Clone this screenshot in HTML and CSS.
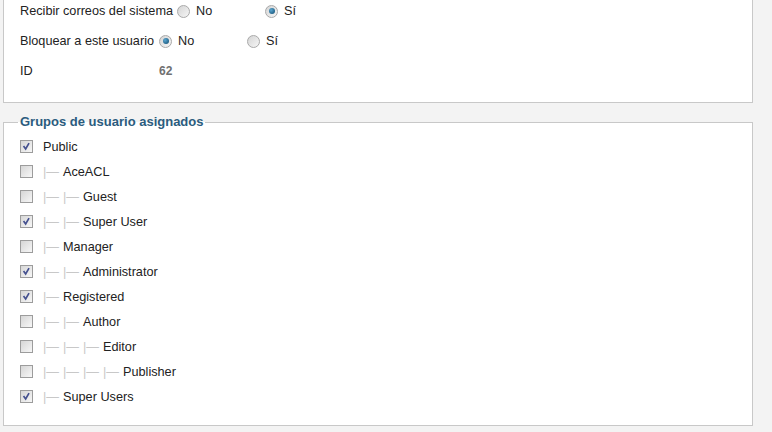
FILE: index.html
```html
<!DOCTYPE html>
<html>

<head>
    <title>Usuario</title>
    <link rel="stylesheet" href="styles.css">
</head>

<body>
    <div class="page">
        <div class="panel">
            <div class="row">
                <span class="row-label">Recibir correos del sistema</span>
                <span class="option"><span class="radio"></span>No</span>
                <span class="option"><span class="radio checked"></span>Sí</span>
            </div>
            <div class="row">
                <span class="row-label">Bloquear a este usuario</span>
                <span class="option"><span class="radio checked"></span>No</span>
                <span class="option"><span class="radio"></span>Sí</span>
            </div>
            <div class="row">
                <span class="row-label">ID</span>
                <span class="value">62</span>
            </div>
        </div>

        <fieldset class="groups">
            <legend>Grupos de usuario asignados</legend>
            <ul class="group-list">
                <li><span class="checkbox checked"><svg viewBox="0 0 13 13"><path d="M3 6L5.5 9.5L9.5 2.5" /></svg></span>Public</li>
                <li><span class="checkbox"></span><span class="gi">|&mdash;</span>AceACL</li>
                <li><span class="checkbox"></span><span class="gi">|&mdash;</span><span class="gi">|&mdash;</span>Guest</li>
                <li><span class="checkbox checked"><svg viewBox="0 0 13 13"><path d="M3 6L5.5 9.5L9.5 2.5" /></svg></span><span class="gi">|&mdash;</span><span class="gi">|&mdash;</span>Super User</li>
                <li><span class="checkbox"></span><span class="gi">|&mdash;</span>Manager</li>
                <li><span class="checkbox checked"><svg viewBox="0 0 13 13"><path d="M3 6L5.5 9.5L9.5 2.5" /></svg></span><span class="gi">|&mdash;</span><span class="gi">|&mdash;</span>Administrator</li>
                <li><span class="checkbox checked"><svg viewBox="0 0 13 13"><path d="M3 6L5.5 9.5L9.5 2.5" /></svg></span><span class="gi">|&mdash;</span>Registered</li>
                <li><span class="checkbox"></span><span class="gi">|&mdash;</span><span class="gi">|&mdash;</span>Author</li>
                <li><span class="checkbox"></span><span class="gi">|&mdash;</span><span class="gi">|&mdash;</span><span class="gi">|&mdash;</span>Editor</li>
                <li><span class="checkbox"></span><span class="gi">|&mdash;</span><span class="gi">|&mdash;</span><span class="gi">|&mdash;</span><span class="gi">|&mdash;</span>Publisher</li>
                <li><span class="checkbox checked"><svg viewBox="0 0 13 13"><path d="M3 6L5.5 9.5L9.5 2.5" /></svg></span><span class="gi">|&mdash;</span>Super Users</li>
            </ul>
        </fieldset>
    </div>
</body>

</html>
```

FILE: styles.css
```css
:root {
    --background: #f3f3f3;
    --border: #c8c8c8;
    --text: #222;
    --text-secondary: #707070;
    --legend: #2b5c7e;
    --tree: #c8c8c8;
}

* {
    margin: 0;
    padding: 0;
    box-sizing: border-box;
}

body {
    font-family: "Liberation Sans", Arial, sans-serif;
    font-size: 12.7px;
    color: var(--text);
    background: var(--background);
}

.page {
    width: 750px;
    margin-left: 3px;
}

.panel {
    background: white;
    border: 1px solid var(--border);
    border-top: none;
    padding: 0 0 20px 16px;
    display: flex;
    flex-direction: column;
    gap: 8px;
}

.row {
    display: flex;
    align-items: center;
    height: 22px;
}

.row-label {
    min-width: 139px;
    padding-right: 4px;
}

.option {
    display: inline-flex;
    align-items: center;
    min-width: 88px;
}

.radio {
    width: 13px;
    height: 13px;
    margin-right: 6px;
    border-radius: 50%;
    border: 1px solid #a9a9a9;
    background: linear-gradient(135deg, #d4d4d4, #f6f6f6);
    display: inline-flex;
    align-items: center;
    justify-content: center;
}

.radio.checked::after {
    content: "";
    width: 6px;
    height: 6px;
    border-radius: 50%;
    background: radial-gradient(circle at 35% 35%, #5ba6d0, #0d4a6e);
}

.value {
    color: var(--text-secondary);
    font-weight: bold;
    font-size: 12px;
}

.groups {
    margin-top: 11px;
    background: white;
    border: 1px solid var(--border);
    padding: 4px 0 16px 14px;
}

.groups legend {
    padding: 0 2px;
    font-size: 13px;
    line-height: 16px;
    font-weight: bold;
    color: var(--legend);
}

.group-list {
    list-style: none;
}

.group-list li {
    display: flex;
    align-items: center;
    height: 25px;
    padding-left: 2px;
}

.checkbox {
    width: 13px;
    height: 13px;
    margin-right: 10px;
    border: 1px solid #9c9c9c;
    background: linear-gradient(135deg, #d6d6d6, #f7f7f7);
    display: inline-block;
}

.checkbox svg {
    display: block;
    width: 11px;
    height: 11px;
}

.checkbox svg path {
    fill: none;
    stroke: #44508f;
    stroke-width: 2;
}

.gi {
    display: inline-block;
    width: 20px;
    color: var(--tree);
}
```
